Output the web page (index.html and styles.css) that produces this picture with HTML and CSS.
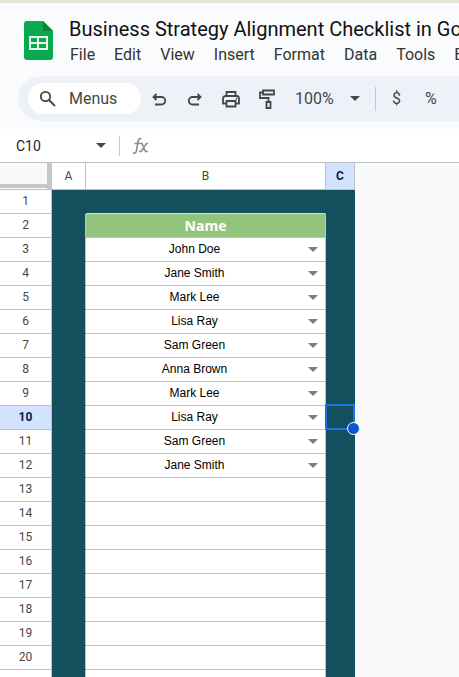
FILE: index.html
```html
<!DOCTYPE html>
<html lang="en">
<head>
  <meta charset="UTF-8">
  <meta name="viewport" content="width=device-width, initial-scale=1.0">
  <title>Business Strategy Alignment Checklist in Google Sheets</title>
  <link rel="stylesheet" href="styles.css">
</head>
<body>
  <header class="app-header">
    <div class="title-bar">
      <svg class="logo" width="30" height="40" viewBox="0 0 30 40" aria-hidden="true">
        <path fill="#0aa84f" d="M3 0h16l10 10v26a3 3 0 0 1-3 3H3a3 3 0 0 1-3-3V3a3 3 0 0 1 3-3z"/>
        <path fill="#06833c" d="M19 0l10 10H19z"/>
        <path fill="#e6f7ec" fill-rule="evenodd" d="M5 15h19v14H5zM7 17v4h6v-4zM15 17v4h7v-4zM7 23v4h6v-4zM15 23v4h7v-4z"/>
      </svg>
      <div class="title-text">
        <h1>Business Strategy Alignment Checklist in Google Sheets</h1>
        <nav class="menu">
          <button>File</button>
          <button>Edit</button>
          <button>View</button>
          <button>Insert</button>
          <button>Format</button>
          <button>Data</button>
          <button>Tools</button>
          <button>Extensions</button>
        </nav>
      </div>
    </div>

    <div class="toolbar">
      <button class="menus">
        <svg width="18" height="18" viewBox="0 0 18 18" fill="none" stroke="#444746" stroke-width="1.800"><circle cx="6.500" cy="6.500" r="4.700"/><path d="M10 10L16 16"/></svg>
        <span>Menus</span>
      </button>
      <div class="tools">
        <button aria-label="Undo">
          <svg width="16" height="16" viewBox="0 0 16 16" fill="none" stroke="#444746" stroke-width="1.800"><path d="M5.500 3L2.500 6L5.500 9M2.500 6H10.500a3.700 3.700 0 0 1 0 7.500H4"/></svg>
        </button>
        <button aria-label="Redo">
          <svg width="16" height="16" viewBox="0 0 16 16" fill="none" stroke="#444746" stroke-width="1.800"><path d="M10.500 3L13.500 6L10.500 9M13.500 6H5.500a3.700 3.700 0 0 0 0 7.500H12"/></svg>
        </button>
        <button aria-label="Print">
          <svg width="20" height="20" viewBox="0 0 20 20" fill="none" stroke="#444746" stroke-width="1.800"><path d="M5.500 7V3h9v4M5.500 14.500H2V9.500A2.500 2.500 0 0 1 4.500 7h11A2.500 2.500 0 0 1 18 9.500v5h-3.500M5.500 12h9v5.500h-9z"/><circle cx="15.500" cy="9.800" r=".9" fill="#444746" stroke="none"/></svg>
        </button>
        <button aria-label="Paint format">
          <svg width="18" height="20" viewBox="0 0 18 20" fill="none" stroke="#444746" stroke-width="1.800"><path d="M5 1.500h11v4H5zM5 3.500H2V9h8.500v4M8.500 13h4v6h-4z"/></svg>
        </button>
      </div>
      <label class="zoom">
        <select aria-label="Zoom">
          <option>100%</option>
          <option>75%</option>
          <option>50%</option>
        </select>
      </label>
      <div class="formats">
        <button aria-label="Format as currency">$</button>
        <button aria-label="Format as percent">%</button>
      </div>
    </div>
  </header>

  <div class="formula-bar">
    <label class="name-box">
      <input type="text" value="C10" aria-label="Name box">
    </label>
    <svg class="fx" width="18" height="18" viewBox="0 0 18 18" fill="none" stroke="#8a8d8c" stroke-width="1.600" aria-hidden="true"><path d="M9.500 2C7.500 1 6.500 2 6 4.500L4.500 13.500C4 16 3 16.500 1 16M2.500 6.500H8.500M8 6.500h2l3.500 8h2.500M16 6.500h-1.500l-5.500 8H7"/></svg>
  </div>

  <main class="sheet">
    <table>
      <colgroup>
        <col class="col-head">
        <col class="col-a">
        <col class="col-b">
        <col class="col-c">
      </colgroup>
      <thead>
        <tr><th class="corner"></th><th>A</th><th>B</th><th class="selected">C</th></tr>
      </thead>
      <tbody>
        <tr><th>1</th><td class="dark"></td><td class="dark top"></td><td class="dark"></td></tr>
        <tr><th>2</th><td class="dark"></td><td class="heading">Name</td><td class="dark"></td></tr>
        <tr><th>3</th><td class="dark"></td><td><label class="pick"><select aria-label="B3"><option>John Doe</option></select></label></td><td class="dark"></td></tr>
        <tr><th>4</th><td class="dark"></td><td><label class="pick"><select aria-label="B4"><option>Jane Smith</option></select></label></td><td class="dark"></td></tr>
        <tr><th>5</th><td class="dark"></td><td><label class="pick"><select aria-label="B5"><option>Mark Lee</option></select></label></td><td class="dark"></td></tr>
        <tr><th>6</th><td class="dark"></td><td><label class="pick"><select aria-label="B6"><option>Lisa Ray</option></select></label></td><td class="dark"></td></tr>
        <tr><th>7</th><td class="dark"></td><td><label class="pick"><select aria-label="B7"><option>Sam Green</option></select></label></td><td class="dark"></td></tr>
        <tr><th>8</th><td class="dark"></td><td><label class="pick"><select aria-label="B8"><option>Anna Brown</option></select></label></td><td class="dark"></td></tr>
        <tr><th>9</th><td class="dark"></td><td><label class="pick"><select aria-label="B9"><option>Mark Lee</option></select></label></td><td class="dark"></td></tr>
        <tr><th class="selected">10</th><td class="dark"></td><td><label class="pick"><select aria-label="B10"><option>Lisa Ray</option></select></label></td><td class="dark active"></td></tr>
        <tr><th>11</th><td class="dark"></td><td><label class="pick"><select aria-label="B11"><option>Sam Green</option></select></label></td><td class="dark"></td></tr>
        <tr><th>12</th><td class="dark"></td><td><label class="pick"><select aria-label="B12"><option>Jane Smith</option></select></label></td><td class="dark"></td></tr>
        <tr><th>13</th><td class="dark"></td><td></td><td class="dark"></td></tr>
        <tr><th>14</th><td class="dark"></td><td></td><td class="dark"></td></tr>
        <tr><th>15</th><td class="dark"></td><td></td><td class="dark"></td></tr>
        <tr><th>16</th><td class="dark"></td><td></td><td class="dark"></td></tr>
        <tr><th>17</th><td class="dark"></td><td></td><td class="dark"></td></tr>
        <tr><th>18</th><td class="dark"></td><td></td><td class="dark"></td></tr>
        <tr><th>19</th><td class="dark"></td><td></td><td class="dark"></td></tr>
        <tr><th>20</th><td class="dark"></td><td></td><td class="dark"></td></tr>
        <tr><th></th><td class="dark"></td><td></td><td class="dark"></td></tr>
      </tbody>
    </table>
  </main>
</body>
</html>
```

FILE: styles.css
```css
* {
  box-sizing: border-box;
}
body {
  margin: 0;
  height: 100vh;
  display: flex;
  flex-direction: column;
  overflow: hidden;
  background: #fff;
  color: #1f1f1f;
  font-family: Roboto, "Liberation Sans", sans-serif;
}
button, select, input {
  margin: 0;
  padding: 0;
  border: none;
  background: none;
  color: inherit;
  font: inherit;
}
select {
  appearance: none;
}
svg {
  display: block;
  flex: none;
}

/* Title and menus */
.app-header {
  flex: none;
  padding-bottom: 8px;
  border-top: 3px solid #e3e8d8;
  background: #f9fbfd;
}
.title-bar {
  display: flex;
  gap: 15px;
  padding: 13px 0 8px 24px;
}
.logo {
  margin-top: 5px;
}
.title-text {
  flex: 1;
  min-width: 0;
  overflow: hidden;
}
h1 {
  margin: 0;
  overflow: hidden;
  white-space: nowrap;
  font-size: 20px;
  font-weight: 400;
  line-height: 26px;
  color: #111;
}
.menu {
  display: flex;
  gap: 19px;
  padding-left: 1px;
  font-size: 16px;
  line-height: 26px;
  color: #333;
}

/* Toolbar */
.toolbar {
  display: flex;
  align-items: center;
  height: 45px;
  margin-left: 18px;
  padding-left: 10px;
  overflow: hidden;
  border-radius: 23px 0 0 23px;
  background: #eef2f8;
  color: #444746;
  font-size: 16px;
}
.menus {
  display: flex;
  flex: none;
  align-items: center;
  gap: 12px;
  width: 113px;
  height: 31px;
  padding-left: 11px;
  border-radius: 16px;
  background: #fff;
}
.tools {
  display: flex;
  flex: none;
  gap: 12px;
  padding-left: 6px;
}
.tools button {
  display: flex;
  align-items: center;
  justify-content: center;
  width: 24px;
  height: 24px;
}
.zoom {
  flex: none;
  display: flex;
  align-items: center;
  margin-left: 16px;
  padding-right: 15px;
  border-right: 1px solid #c7c7c7;
  line-height: 24px;
}
.zoom select {
  width: 55px;
}
.zoom::after, .name-box::after, .pick::after {
  content: "";
  flex: none;
  border: 5px solid transparent;
  border-top-color: #444746;
  border-bottom: none;
}
.formats {
  display: flex;
  gap: 24px;
  padding-left: 16px;
}

/* Name box and formula bar */
.formula-bar {
  display: flex;
  flex: none;
  align-items: center;
  height: 34px;
  border-bottom: 1px solid #c0c0c0;
}
.name-box {
  display: flex;
  align-items: center;
  width: 120px;
  height: 20px;
  padding: 0 13px 0 16px;
  border-right: 1px solid #c7c7c7;
}
.name-box input {
  flex: 1;
  min-width: 0;
  font-size: 14px;
}
.fx {
  margin-left: 12px;
}

/* Grid */
.sheet {
  flex: 1;
  min-height: 0;
  overflow: hidden;
  background: #f8faf9;
}
table {
  width: 355px;
  table-layout: fixed;
  border-collapse: separate;
  border-spacing: 0;
  background: #fff;
}
.col-head {
  width: 52px;
}
.col-a {
  width: 34px;
}
.col-b {
  width: 240px;
}
.col-c {
  width: 29px;
}
th, td {
  height: 24px;
  padding: 0;
  border-right: 1px solid #c0c0c0;
  border-bottom: 1px solid #c0c0c0;
  line-height: 23px;
  text-align: center;
}
td {
  border-color: #c0c8b0;
}
th {
  color: #444746;
  font-size: 12px;
  font-weight: 400;
}
thead th {
  height: 27px;
}
.corner {
  border-right: 5px solid #c4c7c5;
  box-shadow: inset 0 -1px #fff, inset 0 -5px #c4c7c5;
  background: #f8f9fa;
}
th.selected {
  background: #d3e3fd;
  color: #041e49;
  font-weight: 700;
}
.dark {
  border-color: #134f5c;
  background: #134f5c;
}
.dark:nth-child(2) {
  border-right-color: #c0c8b0;
}
tbody tr:first-child .dark:nth-child(2) {
  border-right-color: #134f5c;
}
.dark.top {
  border-bottom-color: #d5e4cf;
}
.heading {
  background: #93c47d;
  color: #fff;
  font-family: "Open Sans", "Noto Sans", sans-serif;
  font-size: 14px;
  font-weight: 700;
}
.pick {
  display: flex;
  align-items: center;
  height: 23px;
  padding-right: 7px;
}
.pick select {
  flex: 1;
  padding-right: 5px;
  color: #000;
  font-family: "Liberation Sans", Arial, sans-serif;
  font-size: 12px;
  text-align: center;
  text-align-last: center;
}
.pick::after {
  border-top-color: #7d7d7d;
}
.active {
  position: relative;
}
.active::before {
  content: "";
  position: absolute;
  inset: -2px -1px -1px -1px;
  border: 2px solid #1a73e8;
}
.active::after {
  content: "";
  position: absolute;
  right: -6px;
  bottom: -6px;
  width: 11px;
  height: 11px;
  border: 1px solid #fff;
  border-radius: 50%;
  background: #0b57d0;
}
```
